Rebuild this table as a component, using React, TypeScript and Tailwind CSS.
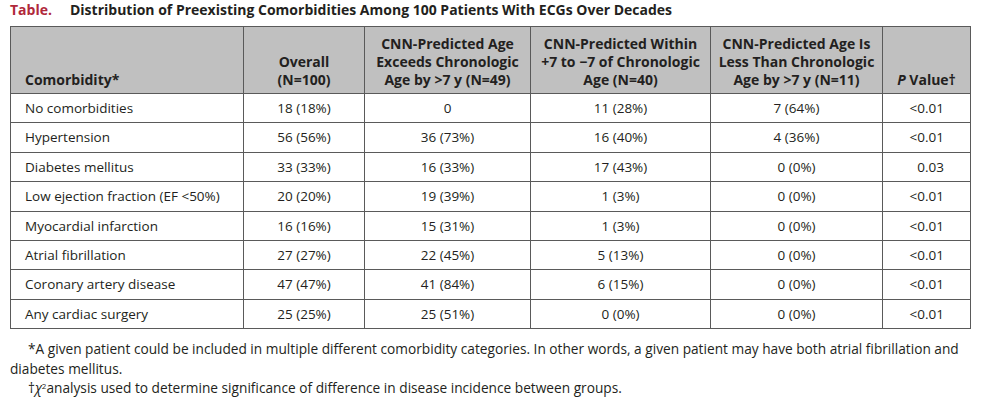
const rows: [string, string, string, string, string, string][] = [
  ["No comorbidities", "18 (18%)", "0", "11 (28%)", "7 (64%)", "<0.01"],
  ["Hypertension", "56 (56%)", "36 (73%)", "16 (40%)", "4 (36%)", "<0.01"],
  ["Diabetes mellitus", "33 (33%)", "16 (33%)", "17 (43%)", "0 (0%)", "0.03"],
  ["Low ejection fraction (EF <50%)", "20 (20%)", "19 (39%)", "1 (3%)", "0 (0%)", "<0.01"],
  ["Myocardial infarction", "16 (16%)", "15 (31%)", "1 (3%)", "0 (0%)", "<0.01"],
  ["Atrial fibrillation", "27 (27%)", "22 (45%)", "5 (13%)", "0 (0%)", "<0.01"],
  ["Coronary artery disease", "47 (47%)", "41 (84%)", "6 (15%)", "0 (0%)", "<0.01"],
  ["Any cardiac surgery", "25 (25%)", "25 (51%)", "0 (0%)", "0 (0%)", "<0.01"],
];

const th = "border border-[#5a5a5a] bg-[#c0c0c0] text-[14px] font-bold text-center align-bottom pb-[4px] leading-[18px] px-0";
const td = "border border-[#5a5a5a] h-[29.4px] text-center p-0";

export default function App() {
  return (
    <div className="bg-white w-[981px] h-[411px] text-[#231f20] font-['Open_Sans',sans-serif]">
      <div className="pl-[10px] pt-0 text-[14px] font-bold leading-[20px]">
        <span className="text-[#b0283a]">Table.</span>
        <span className="ml-[18px]">
          Distribution of Preexisting Comorbidities Among 100 Patients With ECGs Over Decades
        </span>
      </div>
      <div className="pl-[10px] pt-[6px]">
        <table className="w-[960px] table-fixed border-collapse text-[13.5px]">
          <colgroup>
            <col className="w-[233px]" />
            <col className="w-[121px]" />
            <col className="w-[166px]" />
            <col className="w-[180px]" />
            <col className="w-[172px]" />
            <col className="w-[88px]" />
          </colgroup>
          <thead>
            <tr className="h-[67px]">
              <th className={`${th} !text-left pl-[14px]`}>Comorbidity*</th>
              <th className={th}>
                Overall
                <br />
                (N=100)
              </th>
              <th className={th}>
                CNN-Predicted Age
                <br />
                Exceeds Chronologic
                <br />
                Age by &gt;7 y (N=49)
              </th>
              <th className={th}>
                CNN-Predicted Within
                <br />
                +7 to −7 of Chronologic
                <br />
                Age (N=40)
              </th>
              <th className={th}>
                CNN-Predicted Age Is
                <br />
                Less Than Chronologic
                <br />
                Age by &gt;7 y (N=11)
              </th>
              <th className={th}>
                <i>P</i> Value†
              </th>
            </tr>
          </thead>
          <tbody>
            {rows.map((r) => (
              <tr key={r[0]}>
                <td className={`${td} !text-left pl-[14px]`}>{r[0]}</td>
                <td className={td}>{r[1]}</td>
                <td className={td}>{r[2]}</td>
                <td className={td}>{r[3]}</td>
                <td className={td}>{r[4]}</td>
                <td className={`${td} !text-right pr-[26px]`}>{r[5]}</td>
              </tr>
            ))}
          </tbody>
        </table>
      </div>
      <div className="px-[10px] pt-[10px] text-[13.7px] leading-[19.5px]">
        <p className="indent-[18px] whitespace-nowrap">
          *A given patient could be included in multiple different comorbidity categories. In other words, a given
          patient may have both atrial fibrillation and
          <br />
          diabetes mellitus.
        </p>
        <p className="indent-[18px]">
          †<i>χ</i>
          <sup className="text-[8px] leading-none">2</sup>analysis used to determine significance of difference in
          disease incidence between groups.
        </p>
      </div>
    </div>
  );
}
